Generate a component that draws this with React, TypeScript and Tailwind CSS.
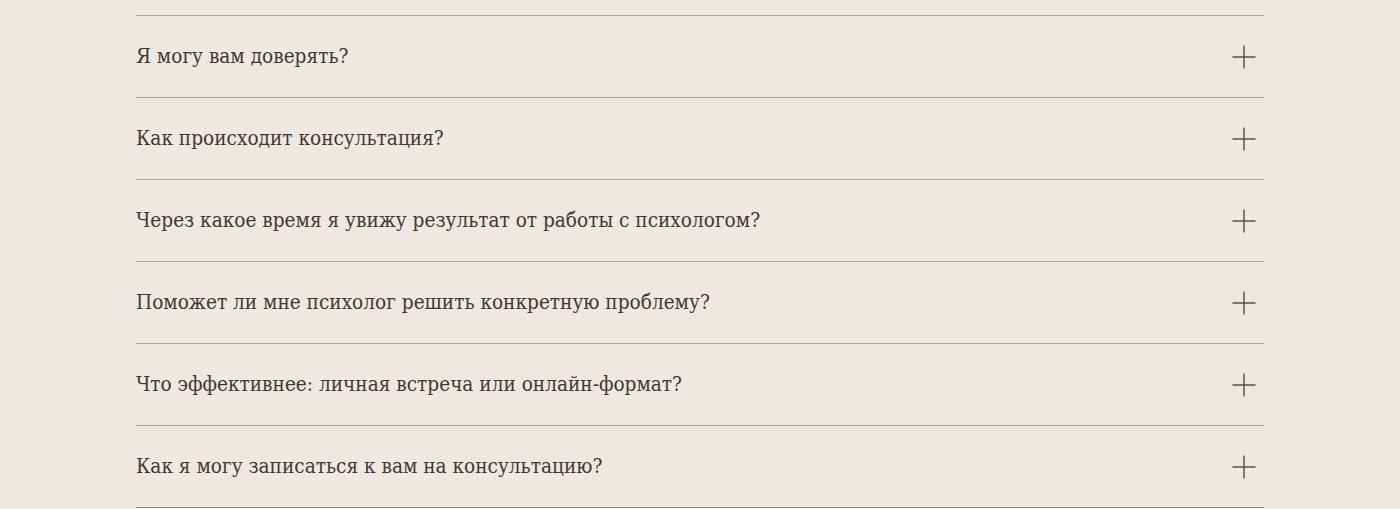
const questions = [
  "Я могу вам доверять?",
  "Как происходит консультация?",
  "Через какое время я увижу результат от работы с психологом?",
  "Поможет ли мне психолог решить конкретную проблему?",
  "Что эффективнее: личная встреча или онлайн-формат?",
  "Как я могу записаться к вам на консультацию?",
]

function PlusIcon() {
  return (
    <svg width="24" height="24" viewBox="0 0 24 24" fill="none" stroke="#55504c" strokeWidth="1.4" aria-hidden="true">
      <path d="M12 0.5v23M0.5 12h23" />
    </svg>
  )
}

export default function App() {
  return (
    <div className="min-h-[509px] bg-[#ede8e2] pt-[15px]">
      <div className="mx-[136px] border-t border-[#aaa59f]">
        {questions.map((q, i) => (
          <button
            key={i}
            className={`w-full h-[82px] flex items-center justify-between border-b text-left ${i === questions.length - 1 ? "border-[#8f8a85]" : "border-[#aaa59f]"}`}
          >
            <span className="text-[20.6px] text-[#3f3936] font-['DejaVu_Serif_Condensed','DejaVu_Serif',serif]">{q}</span>
            <span className="mr-[8px] flex items-center">
              <PlusIcon />
            </span>
          </button>
        ))}
      </div>
    </div>
  )
}
